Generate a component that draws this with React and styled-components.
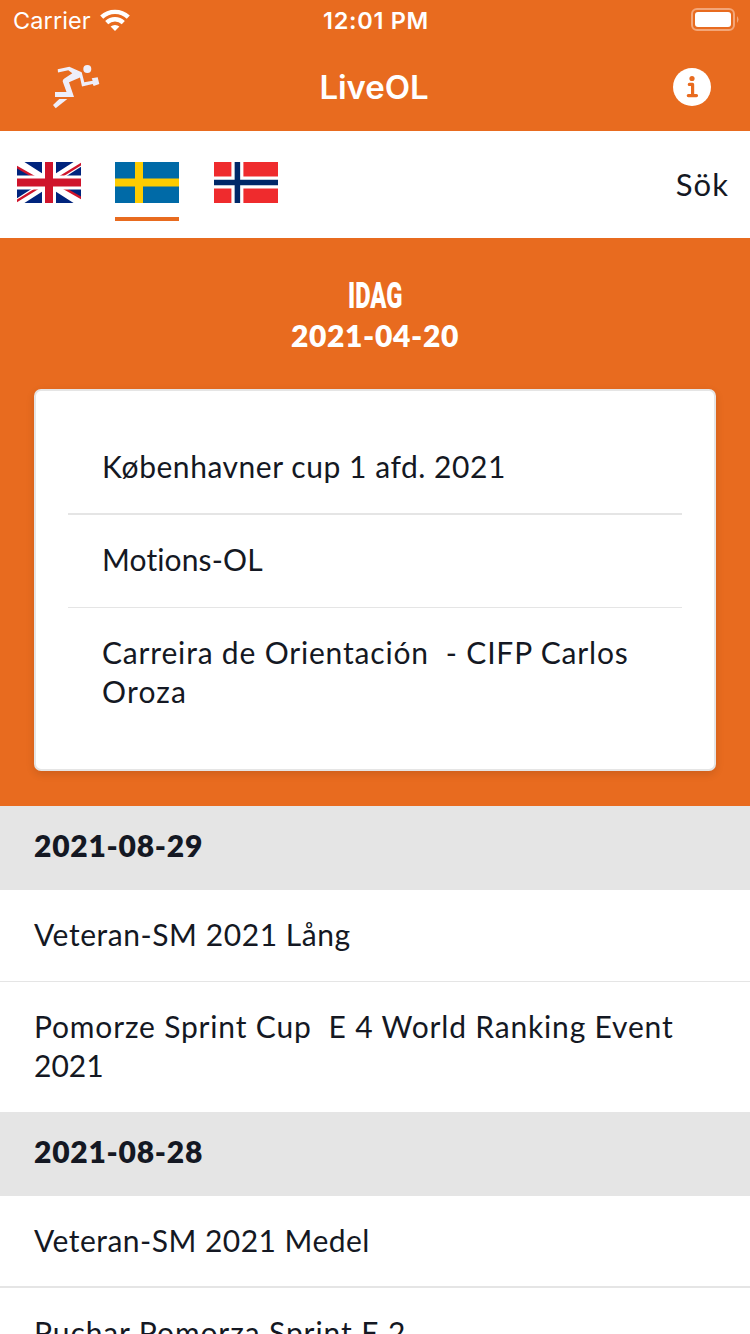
import React from 'react';
import styled, { createGlobalStyle } from 'styled-components';

const ORANGE = '#e86b1f';
const INK = '#141823';
const LINE = '#e5e5e5';

const Global = createGlobalStyle`
  * { box-sizing: border-box; }
  body { margin: 0; background: #fff; }
`;

const Screen = styled.main`
  width: 750px;
  height: 1334px;
  overflow: hidden;
  background: #fff;
  color: ${INK};
  font-family: Lato, "Open Sans", sans-serif;
  font-size: 30px;
  font-variant-ligatures: none;
  line-height: 39px;
`;

const Header = styled.header`
  height: 131px;
  background: ${ORANGE};
  color: #fff;
  font-family: Inter, Roboto, sans-serif;
`;

const StatusBar = styled.div`
  display: grid;
  grid-template-columns: 1fr auto 1fr;
  align-items: center;
  height: 40px;
  padding: 0 11px 0 13px;
  line-height: 38px;
`;

const Carrier = styled.div`
  display: flex;
  align-items: center;
  gap: 9px;
  font-size: 23.5px;
  letter-spacing: 0.1px;
`;

const StatusText = styled.span`
  padding-top: 2px;
`;

const Clock = styled.div`
  padding-top: 2px;
  font-size: 23.5px;
  font-weight: 580;
  letter-spacing: 0.7px;
`;

const Battery = styled.svg`
  justify-self: end;
`;

const NavBar = styled.div`
  display: grid;
  grid-template-columns: 1fr auto 1fr;
  align-items: center;
  height: 94px;
  padding: 0 39px;
`;

const Logo = styled.svg`
  margin-left: 12px;
`;

const Title = styled.h1`
  margin: 0;
  padding-right: 2px;
  font-size: 33px;
  font-weight: 580;
  line-height: 40px;
  letter-spacing: -0.1px;
`;

const InfoIcon = styled.svg`
  justify-self: end;
`;

const LanguageBar = styled.nav`
  display: flex;
  justify-content: space-between;
  height: 107px;
  padding: 31px 21px 0 17px;
`;

const Flags = styled.div`
  display: flex;
  gap: 34.4px;
`;

const FlagTab = styled.div`
  width: 64px;
  height: 59px;
  border-bottom: 4px solid ${(p) => (p.$active ? ORANGE : 'transparent')};
  svg { display: block; }
`;

const Text = styled.span`
  letter-spacing: ${(p) => p.$track || 0}px;
  white-space: pre;
`;

const Search = styled.div`
  padding-top: 3px;
  font-size: 31px;
`;

const Today = styled.section`
  height: 568px;
  padding: 39px 34px 0;
  background: ${ORANGE};
`;

const TodayHeading = styled.div`
  display: flex;
  flex-direction: column;
  align-items: center;
  height: 112px;
  color: #fff;
  font-weight: 800;
  line-height: 38px;
`;

const TodayLabel = styled.div`
  font-family: Roboto, sans-serif;
  font-size: 36px;
  font-weight: 900;
  line-height: 39px;
  transform: scaleX(0.66);
`;

const Card = styled.div`
  height: 382px;
  padding: 31px 32px;
  border: 2px solid ${LINE};
  border-radius: 7px;
  background: #fff;
  box-shadow: 0 3px 8px rgba(0, 0, 0, 0.12);
`;

const Row = styled.div`
  padding: 25px 34px ${(p) => (p.$tight ? 26 : 27)}px;
  border-bottom: ${(p) => p.$rule || 0}px solid ${LINE};
`;

const CardRow = styled(Row)`
  padding-bottom: ${(p) => (p.$rule === 1 ? 28 : 27)}px;
`;

const DateHeader = styled.h2`
  height: 84px;
  margin: 0;
  padding: 20px 34px;
  background: ${LINE};
  font-size: 30px;
  font-weight: 800;
  line-height: 39px;
`;

const Lines = ({ lines }) =>
  lines.map(([text, track]) => (
    <div key={text}>
      <Text $track={track}>{text}</Text>
    </div>
  ));

const Wifi = () => (
  <svg width="30" height="24" viewBox="0 0 30 24" fill="none" stroke="#fff" strokeWidth="4.4">
    <path d="M1.700 9.200a19.300 19.300 0 0 1 26.600 0" />
    <path d="M6.700 14.600a11.900 11.900 0 0 1 16.600 0" />
    <path d="M15 23l-4.400-4.400a6.500 6.500 0 0 1 8.800 0z" fill="#fff" stroke="none" />
  </svg>
);

const Runner = () => (
  <Logo width="50" height="46" viewBox="0 0 50 46" fill="#eeeefa">
    <circle cx="36.300" cy="5" r="4" />
    <path d="M6.700 5.300 18.300 2.700 30.700 8.300 33.300 18.300 41.700 16.700 40.700 14.300 46.700 13.300 48.300 20 42.700 22 41.700 20 31 22.500 29 13.500 18 18.300 23 33H4V28h11.500L11.700 17.500Q11.500 15.800 13 14.800L21.300 9.300 17.300 6.300 7 8.600z" />
    <path d="M8.300 34.900h8L4.700 44.300 2 41z" />
  </Logo>
);

const UkFlag = () => (
  <svg width="64" height="41" viewBox="0 0 64 41">
    <path fill="#00247d" d="M0 0h64v41H0z" />
    <path stroke="#fff" strokeWidth="8" d="M0 0l64 41M64 0 0 41" />
    <path stroke="#cf142b" strokeWidth="2.500" d="M-1 4.500 27 20.500M65 36.500 37 20.500M65 1.500 35 20M-1 39.500 29 21" />
    <path stroke="#fff" strokeWidth="14" d="M32 0v41M0 20.500h64" />
    <path stroke="#cf142b" strokeWidth="8" d="M32 0v41M0 20.500h64" />
  </svg>
);

const SwedenFlag = () => (
  <svg width="64" height="41" viewBox="0 0 64 41">
    <path fill="#006aa7" d="M0 0h64v41H0z" />
    <path stroke="#fecc00" strokeWidth="8" d="M24 0v41M0 20.500h64" />
  </svg>
);

const NorwayFlag = () => (
  <svg width="64" height="41" viewBox="0 0 64 41">
    <path fill="#ef2b2d" d="M0 0h64v41H0z" />
    <path stroke="#fff" strokeWidth="12" d="M23.400 0v41M0 20.500h64" />
    <path stroke="#002868" strokeWidth="5.500" d="M23.400 0v41M0 20.500h64" />
  </svg>
);

export default function App() {
  return (
    <Screen>
      <Global />
      <Header>
        <StatusBar>
          <Carrier>
            <StatusText>Carrier</StatusText>
            <Wifi />
          </Carrier>
          <Clock>12:01 PM</Clock>
          <Battery width="48" height="24" viewBox="0 0 48 24">
            <rect x="1" y="1" width="42" height="21" rx="5" fill="none" stroke="#f3a678" strokeWidth="2" />
            <rect x="4" y="4" width="36" height="15" rx="3" fill="#fff" />
            <path d="M46 8q3 3.500 0 7z" fill="#f3a678" />
          </Battery>
        </StatusBar>
        <NavBar>
          <Runner />
          <Title>LiveOL</Title>
          <InfoIcon width="38" height="38" viewBox="0 0 38 38">
            <circle cx="19" cy="19" r="19" fill="#fff" />
            <circle cx="19" cy="10.500" r="2.600" fill={ORANGE} />
            <path d="M16.300 16.400h3.300v11M15.300 27.600h8.200" fill="none" stroke={ORANGE} strokeWidth="3.200" strokeLinecap="round" strokeLinejoin="round" />
          </InfoIcon>
        </NavBar>
      </Header>
      <LanguageBar>
        <Flags>
          <FlagTab><UkFlag /></FlagTab>
          <FlagTab $active><SwedenFlag /></FlagTab>
          <FlagTab><NorwayFlag /></FlagTab>
        </Flags>
        <Search><Text $track={1.1}>Sök</Text></Search>
      </LanguageBar>
      <Today>
        <TodayHeading>
          <TodayLabel>IDAG</TodayLabel>
          <Text $track={0.65}>2021-04-20</Text>
        </TodayHeading>
        <Card>
          <CardRow $rule={2}><Lines lines={[['Københavner cup 1 afd. 2021', 0.54]]} /></CardRow>
          <CardRow $rule={1}><Lines lines={[['Motions-OL', 0.13]]} /></CardRow>
          <CardRow><Lines lines={[['Carreira de Orientación  - CIFP Carlos', 0.82], ['Oroza', 1.2]]} /></CardRow>
        </Card>
      </Today>
      <DateHeader><Text $track={0.75}>2021-08-29</Text></DateHeader>
      <Row $rule={1}><Lines lines={[['Veteran-SM 2021 Lång', 0.56]]} /></Row>
      <Row><Lines lines={[['Pomorze Sprint Cup  E 4 World Ranking Event', 0.82], ['2021', 0]]} /></Row>
      <DateHeader><Text $track={0.75}>2021-08-28</Text></DateHeader>
      <Row $rule={2} $tight><Lines lines={[['Veteran-SM 2021 Medel', 0.48]]} /></Row>
      <Row><Lines lines={[['Puchar Pomorza Sprint E 2', 0.9]]} /></Row>
    </Screen>
  );
}
